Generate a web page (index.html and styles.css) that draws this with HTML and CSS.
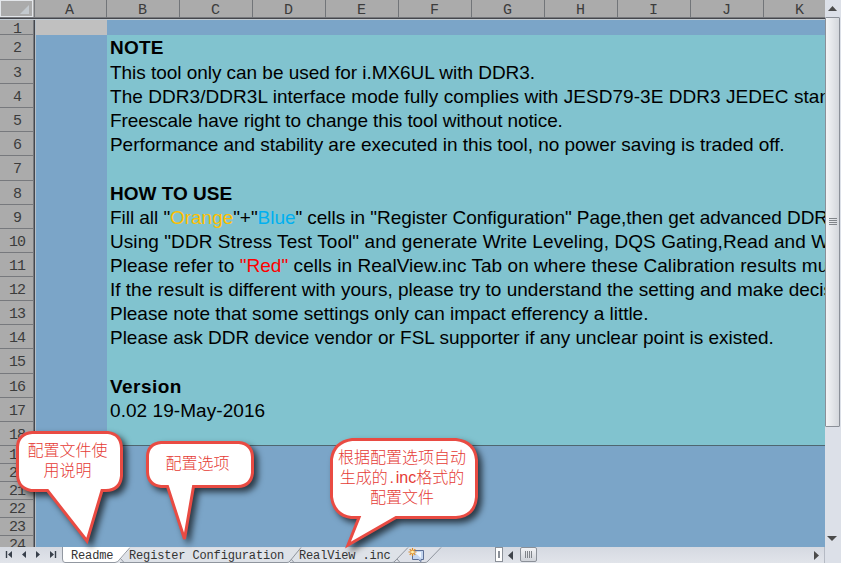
FILE: index.html
```html
<!DOCTYPE html>
<html lang="zh-CN">
<head>
<meta charset="utf-8">
<title>Readme</title>
<link rel="stylesheet" href="styles.css">
</head>
<body>
<div class="app">
  <div class="main">
    <div class="sheet">
      <div class="colhead">
        <div class="corner"><svg width="9" height="9"><path d="M9 0V9H0Z" fill="#c3c9ce"/></svg></div>
        <div class="col first">A</div><div class="col">B</div><div class="col">C</div><div class="col">D</div><div class="col">E</div><div class="col">F</div><div class="col">G</div><div class="col">H</div><div class="col">I</div><div class="col">J</div><div class="col">K</div>
      </div>
      <div class="row r1"><div class="num">1</div><div class="a selected"></div><div class="text"></div></div>
      <div class="row tall"><div class="num">2</div><div class="a"></div><div class="text"><b class="l1">NOTE</b></div></div>
      <div class="row"><div class="num">3</div><div class="a"></div><div class="text"><span class="l2">This tool only can be used for i.MX6UL with DDR3.</span></div></div>
      <div class="row"><div class="num">4</div><div class="a"></div><div class="text"><span class="l3">The DDR3/DDR3L interface mode fully complies with JESD79-3E DDR3 JEDEC standard</span></div></div>
      <div class="row"><div class="num">5</div><div class="a"></div><div class="text"><span class="l4">Freescale have right to change this tool without notice.</span></div></div>
      <div class="row"><div class="num">6</div><div class="a"></div><div class="text"><span class="l5">Performance and stability are executed in this tool, no power saving is traded off.</span></div></div>
      <div class="row tall"><div class="num">7</div><div class="a"></div><div class="text"></div></div>
      <div class="row"><div class="num">8</div><div class="a"></div><div class="text"><b class="l6">HOW TO USE</b></div></div>
      <div class="row"><div class="num">9</div><div class="a"></div><div class="text"><span class="l7">Fill all "<i class="orange">Orange</i>"+"<i class="blue">Blue</i>" cells in "Register Configuration" Page,then get advanced DDR</span></div></div>
      <div class="row"><div class="num">10</div><div class="a"></div><div class="text"><span class="l8">Using "DDR Stress Test Tool" and generate Write Leveling, DQS Gating,Read and Write</span></div></div>
      <div class="row"><div class="num">11</div><div class="a"></div><div class="text"><span class="l9">Please refer to <i class="red">"Red"</i> cells in RealView.inc Tab on where these Calibration results must</span></div></div>
      <div class="row"><div class="num">12</div><div class="a"></div><div class="text"><span class="l10">If the result is different with yours, please try to understand the setting and make decision</span></div></div>
      <div class="row"><div class="num">13</div><div class="a"></div><div class="text"><span class="l11">Please note that some settings only can impact efferency a little.</span></div></div>
      <div class="row"><div class="num">14</div><div class="a"></div><div class="text"><span class="l12">Please ask DDR device vendor or FSL supporter if any unclear point is existed.</span></div></div>
      <div class="row tall"><div class="num">15</div><div class="a"></div><div class="text"></div></div>
      <div class="row"><div class="num">16</div><div class="a"></div><div class="text"><b class="l13">Version</b></div></div>
      <div class="row"><div class="num">17</div><div class="a"></div><div class="text"><span class="l14">0.02 19-May-2016</span></div></div>
      <div class="row last"><div class="num">18</div><div class="a"></div><div class="text"></div></div>
      <div class="row below"><div class="num">19</div></div>
      <div class="row below"><div class="num">20</div></div>
      <div class="row below"><div class="num">21</div></div>
      <div class="row below"><div class="num">22</div></div>
      <div class="row below"><div class="num">23</div></div>
      <div class="row below"><div class="num">24</div></div>
    </div>
    <div class="vscroll">
      <svg class="up" width="16" height="17"><path d="M3 11L7.5 6L12 11Z" fill="#4b4b4b"/></svg>
      <div class="vthumb"><svg width="8" height="8"><path d="M0 .5H8M0 2.5H8M0 4.5H8M0 6.5H8" stroke="#808489"/></svg></div>
      <svg class="down" width="16" height="17"><path d="M2 6H12L7 11Z" fill="#4b4b4b"/></svg>
    </div>
  </div>
  <div class="bottom">
    <div class="nav">
      <svg width="62" height="16"><path d="M6.5 4V11M55.500 4V11" stroke="#38404b" stroke-width="1.4"/><path d="M12 4V11L8 7.500ZM26 4V11L22 7.500ZM36 4V11L40 7.500ZM50 4V11L54 7.500Z" fill="#38404b"/></svg>
    </div>
    <div class="tabs">
      <svg class="tabshapes" width="390" height="16">
        <path d="M320 15.500H363Q365 15.500 366 14L379 .500H330Z" fill="#dee1e8"/>
        <path d="M330 15.500H363Q365 15.500 366 14L379 .500" fill="none" stroke="#8f959e"/>
        <path d="M226 15.500H330Q332 15.500 333 14L346 .500H240Z" fill="#dee2e8"/>
        <path d="M228 15.500H330Q332 15.500 333 14L346 .500" fill="none" stroke="#8f959e"/>
        <path d="M58 15.500H225Q227 15.500 228 14L239 .500H68Z" fill="#dee2e8"/>
        <path d="M58 15.500H225Q227 15.500 228 14L239 .500M229 12L232 15.500M335 12L338 15.500" fill="none" stroke="#8f959e"/>
        <path d="M0 0H69L59 12Q56 15.500 53 15.500H3Q.500 15.500 .500 12Z" fill="#fff"/>
        <path d="M.500 0V12Q.500 15.500 3 15.500H53Q56 15.500 58 12L68 .500M58 11L62 15.500" fill="none" stroke="#9298a1"/>
        <path d="M352 3.500H361.500V12.500H359V14.500L356.500 12.500H350.500V5Z" fill="#c4d6f0" stroke="#5c6f96"/><path d="M352 5H359V11Z" fill="#f2f7ff"/>
        <path d="M350.500 1V9M346.500 5H354.500M347.700 2.200L353.300 7.800M353.300 2.200L347.700 7.800" stroke="#dd8a20" stroke-width="1.200"/><circle cx="350.500" cy="5" r="1.500" fill="#fff0b0"/>
      </svg>
      <span class="t1">Readme</span><span class="t2">Register Configuration</span><span class="t3">RealView .inc</span>
    </div>
    <div class="hscroll">
      <div class="split"><i></i></div>
      <svg width="17" height="16"><path d="M10 4V13L5 8.500Z" fill="#3f444b"/></svg>
      <div class="hthumb"><svg width="8" height="8"><path d="M.5 0V7M2.500 0V7M4.500 0V7M6.500 0V7" stroke="#808489"/></svg></div>
      <svg class="right" width="16" height="16"><path d="M6 4V13L11 8.500Z" fill="#4b4b4b"/></svg>
    </div>
    <div class="grip"></div>
  </div>

  <div class="callout c1">
    <svg width="120" height="125"><path d="M16 1.500H92Q105 3 105.500 17V45Q104 59.500 90 59.500H86L71 110L31.500 59.500H15Q2 57 1.500 44V16Q2 3 16 1.500Z"/></svg>
    <p>配置文件使<br>用说明</p>
  </div>
  <div class="callout c2">
    <svg width="120" height="115"><path d="M15 1.500H93Q106 3 106.500 16V32Q105 45 92 45.500H47.500L38.500 98L21.500 45.500H15Q2 44 1.500 31V15Q2 3 15 1.500Z"/></svg>
    <p>配置选项</p>
  </div>
  <div class="callout c3">
    <svg width="160" height="125"><path d="M22 1.500H126Q145 4 146.500 22V59Q145 78 126 79.500H66L18 107L29 79.500H21Q4 77 1.500 59V21Q4 4 22 1.500Z"/></svg>
    <p>根据配置选项自动<br>生成的<span class="mono">.</span><span class="inc">inc</span>格式的<br>配置文件</p>
  </div>
</div>
</body>
</html>
```
FILE: styles.css
```css
* { box-sizing: border-box; }
body { margin: 0; overflow: hidden; }
.app { position: relative; width: 841px; height: 563px; overflow: hidden; display: flex; flex-direction: column; background: #7ba5c8; }
.main { display: flex; height: 547px; overflow: hidden; }
.sheet { width: 825px; height: 547px; overflow: hidden; }
.colhead { display: flex; width: 840px; height: 20px; background: #ababab; border-bottom: 1px solid #c2cbd2; box-shadow: inset 0 -1px #45474d, inset 0 -2px #77797d; font: 15px/21px "Liberation Mono", monospace; color: #3c3c3c; }
.corner { width: 33px; height: 17px; margin-right: 1px; border: 1px solid #e3e6ea; display: flex; justify-content: flex-end; align-items: flex-end; padding: 0 3px 2px 0; }
.col { width: 73px; height: 18px; text-align: center; border-right: 1px solid #727579; padding-right: 1px; flex: none; }
.first { border-left: 1px solid #77797d; padding-right: 2px; }
.row { display: flex; height: 24px; }
.row.tall { height: 25px; }
.row.r1 { height: 15px; }
.row.below { height: 18px; }
.num { width: 36px; flex: none; background: #ababab; border-right: 1px solid #b7c0c8; box-shadow: inset -1px 0 #45474d, inset -2px 0 #77797d, inset 0 -1px #77797d; font: 15px/27px "Liberation Mono", monospace; letter-spacing: -1px; color: #3c3c3c; text-align: center; padding-right: 1px; overflow: hidden; }
.r1 .num, .below .num { line-height: 20px; }
.a { width: 71px; flex: none; }
.selected { background: #c0c0c0; }
.text { flex: 1; min-width: 0; overflow: hidden; white-space: nowrap; padding-left: 3px; background: #81c3cf; font: 19px/25px "Liberation Sans", Arial, sans-serif; color: #000; }
.r1 .text { background: none; }
.last .text { border-bottom: 1px solid #4f6670; }
.last .a { border-bottom: 1px solid #587594; }
.text i { font-style: normal; }
.l1 { letter-spacing: .25px; }
.l2 { letter-spacing: -.04px; }
.l3 { letter-spacing: .05px; }
.l4 { letter-spacing: -.1px; }
.l5 { letter-spacing: -.05px; }
.l7 { letter-spacing: -.05px; }
.l8 { letter-spacing: .07px; }
.l9 { letter-spacing: .05px; }
.l11 { letter-spacing: -.03px; }
.l12 { letter-spacing: -.01px; }
.l13 { letter-spacing: .45px; }
.l14 { letter-spacing: .06px; }
.orange { color: #ffc000; }
.blue { color: #00b0f0; }
.red { color: #f00; }
.vscroll { width: 16px; background: #dce0e8; display: flex; flex-direction: column; }
.vscroll svg { display: block; flex: none; }
.vthumb { height: 410px; width: 15px; border: 1px solid #8b9098; border-radius: 1px; background: linear-gradient(90deg, #f3f4f6, #d4d7dc); display: flex; align-items: center; justify-content: center; }
.down { margin-top: auto; }
.bottom { height: 16px; display: flex; background: linear-gradient(#d5d9e1, #e1e4ea); overflow: hidden; }
.nav { width: 62px; height: 16px; }
.nav svg, .hscroll svg { display: block; }
.tabs { position: relative; width: 433px; height: 16px; font: 12px/18px "Liberation Mono", monospace; letter-spacing: -.15px; color: #333; white-space: pre; display: flex; padding-left: 9px; }
.tabshapes { position: absolute; left: 0; top: 0; }
.tabs span { position: relative; }
.t1 { width: 58px; }
.t2 { width: 170px; }
.hscroll { display: flex; width: 329px; }
.split { width: 8px; height: 15px; border: 1px solid #8b9098; background: #fff; padding: 3px 2px; }
.split i { display: block; width: 2px; height: 7px; background: #8b9098; }
.hthumb { width: 17px; height: 15px; border: 1px solid #8b9098; border-radius: 2px; background: linear-gradient(#f3f4f6, #d0d3d9); display: flex; align-items: center; justify-content: center; }
.right { margin-left: auto; }
.grip { width: 17px; border-left: 1px solid #b5bac4; background: #dce0e8; }
.callout { position: absolute; }
.callout svg { position: absolute; left: 0; top: 0; overflow: visible; filter: drop-shadow(4px 4px 3px rgba(0,0,0,.65)); }
.callout path { fill: #fff; stroke: #e94b43; stroke-width: 3; stroke-linejoin: miter; }
.callout p { position: relative; margin: 0; text-align: center; font: 300 16px/20px "Noto Sans CJK SC", sans-serif; color: #e53b35; white-space: nowrap; }
.c1 { left: 16px; top: 431px; width: 103px; }
.c1 p { padding-top: 8px; }
.c2 { left: 146px; top: 441px; width: 103px; }
.c2 p { padding-top: 11px; }
.c3 { left: 330px; top: 438px; width: 144px; }
.c3 p { padding-top: 8px; }
.mono { display: inline-block; width: 8px; }
.inc { font-family: "Liberation Sans", sans-serif; line-height: 1; }
```
